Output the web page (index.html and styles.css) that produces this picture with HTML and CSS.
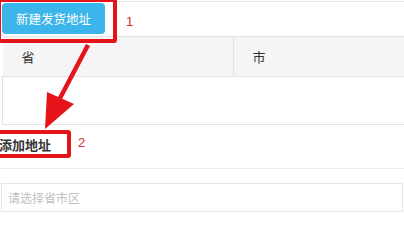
FILE: index.html
```html
<!DOCTYPE html>
<html lang="zh">
<head>
<meta charset="utf-8">
<link rel="stylesheet" href="styles.css">
</head>
<body>
<div class="page">
  <div class="toolbar">
    <button class="btn">新建发货地址</button>
  </div>
  <table class="grid">
    <thead>
      <tr><th class="col-prov">省</th><th>市</th></tr>
    </thead>
    <tbody>
      <tr><td></td><td class="no-left"></td></tr>
    </tbody>
  </table>
  <div class="label-row">添加地址</div>
  <div class="field">
    <div class="input">请选择省市区</div>
  </div>

  <div class="mark mark1"></div>
  <span class="num num1">1</span>
  <svg class="arrow" width="100" height="140" viewBox="0 0 100 140">
    <line x1="88" y1="45" x2="58" y2="102" stroke="#e5141b" stroke-width="4.5"/>
    <polygon points="45,129 47,92 74,104" fill="#e5141b"/>
  </svg>
  <div class="mark mark2"></div>
  <span class="num num2">2</span>
</div>
</body>
</html>
```
FILE: styles.css
```css
html, body {
  margin: 0;
  padding: 0;
  background: #fff;
}
body {
  font-family: "Noto Sans CJK SC", "Liberation Sans", sans-serif;
  width: 404px;
  height: 212px;
  overflow: hidden;
}
.page {
  position: relative;
  padding-top: 1px;
}
.toolbar {
  border-top: 1px solid #e6e6e6;
  height: 33px;
  padding: 1px 0 0 2px;
}
.btn {
  display: block;
  width: 103px;
  height: 31px;
  border: none;
  border-radius: 4px;
  background: #3bb5ea;
  color: #fff;
  font-family: inherit;
  font-size: 12.5px;
  padding: 0;
}
.grid {
  margin-left: 2px;
  width: 402px;
  border-collapse: collapse;
}
.grid th {
  background: #f5f5f5;
  height: 39px;
  padding: 0 0 0 19px;
  text-align: left;
  font-weight: normal;
  font-size: 13px;
  color: #333;
  border-top: 1px solid #e3e3e3;
  border-bottom: 1px solid #e3e3e3;
}
.grid th.col-prov {
  width: 211px;
  border-right: 1px solid #e3e3e3;
}
.grid td {
  height: 47px;
  padding: 0;
  border-bottom: 1px solid #e3e3e3;
  border-left: 1px solid #e3e3e3;
}
.grid td.no-left {
  border-left: none;
}
.label-row {
  height: 43px;
  line-height: 40px;
  font-size: 13px;
  font-weight: bold;
  color: #333;
  margin-left: -1px;
  border-bottom: 1px solid #ececec;
}
.field {
  padding: 14px 1px 0 1px;
}
.input {
  height: 27px;
  line-height: 27px;
  border: 1px solid #e6e6e6;
  padding-left: 6px;
  font-size: 12px;
  color: #c0c0c0;
}
.mark {
  position: absolute;
  border: 4px solid #e5141b;
  border-radius: 3px;
  box-sizing: border-box;
}
.mark1 {
  left: -3px;
  top: -2px;
  width: 120px;
  height: 45px;
}
.mark2 {
  left: -4px;
  top: 130px;
  width: 75px;
  height: 28px;
}
.num {
  position: absolute;
  font-family: "Liberation Sans", sans-serif;
  font-size: 13px;
  color: #d3302b;
  line-height: 14px;
}
.num1 {
  left: 126px;
  top: 15px;
}
.num2 {
  left: 78px;
  top: 136px;
}
.arrow {
  position: absolute;
  left: 0;
  top: 0;
}
```
